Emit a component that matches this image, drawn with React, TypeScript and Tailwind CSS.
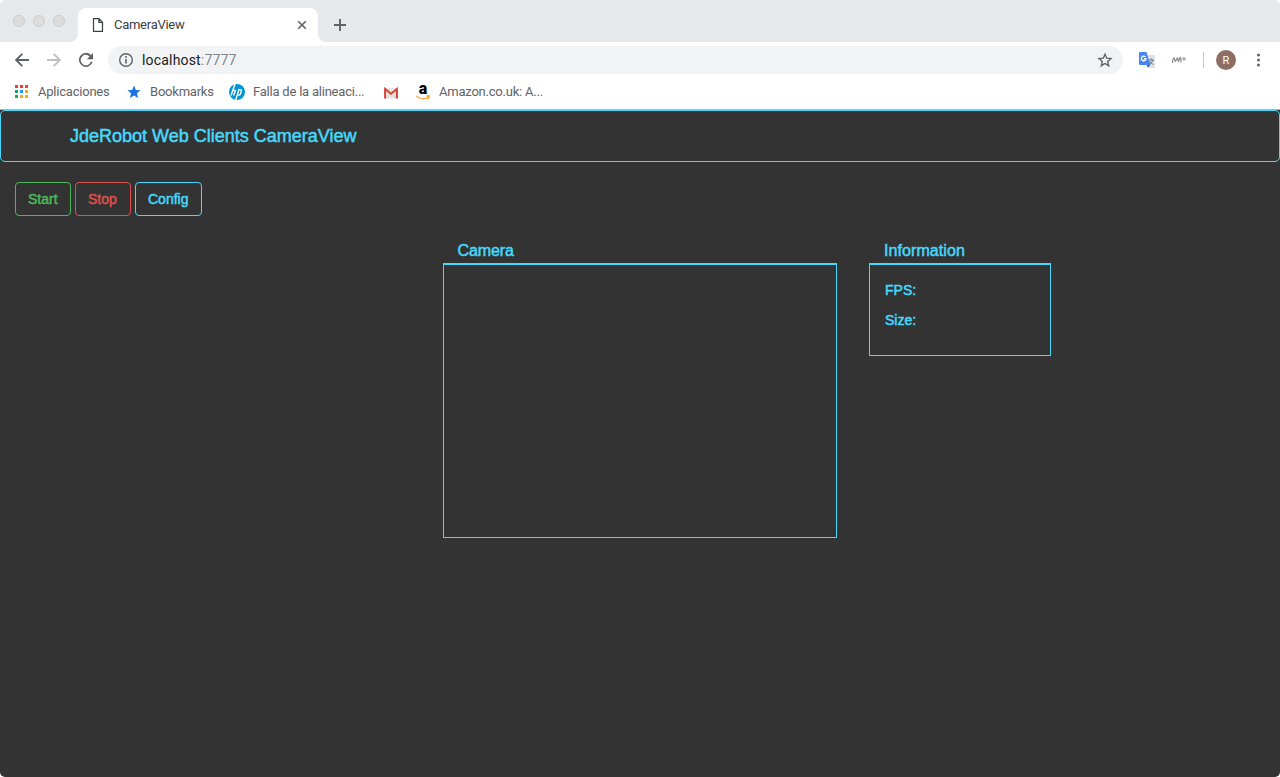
import React from "react";

const chromeFont = "font-['Roboto','Liberation_Sans',sans-serif]";
const pageFont = "font-['Liberation_Sans',sans-serif]";

function TabStrip() {
  return (
    <div className="flex h-[42px] bg-[#e5e9ec] rounded-t-[5px]">
      <div className="flex w-[70px] gap-2 pl-[13px] pt-[15px]">
        {[0, 1, 2].map((i) => (
          <span key={i} className="h-3 w-3 rounded-full border border-[#cbcccd] bg-[#dcdcdc]" />
        ))}
      </div>
      <svg className="mt-[34px] h-2 w-2" viewBox="0 0 8 8"><path d="M8 0v8H0a8 8 0 0 0 8-8" fill="#fff" /></svg>
      <div className="mt-2 flex h-[34px] w-[240px] items-center rounded-t-lg bg-white pl-[14px] pr-[10px]">
        <svg width="12" height="16" viewBox="0 0 12 16" fill="none" stroke="#3c4043" strokeWidth="1.2">
          <path d="M1.5 1.600h5.400l3.600 3.600v9.200h-9zM6.900 1.600v3.800h3.600" />
        </svg>
        <span className="ml-[10px] text-[13px] leading-4 tracking-[-0.27px] text-[#3c4043]">CameraView</span>
        <svg className="ml-auto" width="12" height="12" viewBox="0 0 12 12" stroke="#5f6368" strokeWidth="1.600">
          <path d="m2.200 2.200 7.600 7.600m0-7.600L2.200 9.800" />
        </svg>
      </div>
      <svg className="mt-[34px] h-2 w-2" viewBox="0 0 8 8"><path d="M0 0v8h8a8 8 0 0 1-8-8" fill="#fff" /></svg>
      <svg className="ml-[7px] mt-[18px]" width="14" height="14" viewBox="0 0 14 14" stroke="#5f6368" strokeWidth="1.900">
        <path d="M7 1v12M1 7h12" />
      </svg>
    </div>
  );
}

function Toolbar() {
  return (
    <div className="flex h-9 items-center bg-white pl-[14px]">
      <svg width="16" height="16" viewBox="0 0 16 16" fill="none" stroke="#5f6368" strokeWidth="1.900">
        <path d="M15 8H2.300M8.300 1.800 2.100 8l6.200 6.200" />
      </svg>
      <svg className="ml-4" width="16" height="16" viewBox="0 0 16 16" fill="none" stroke="#bcbec0" strokeWidth="1.900">
        <path d="M1 8h12.700M7.700 1.800 13.900 8l-6.200 6.200" />
      </svg>
      <svg className="ml-4" width="16" height="16" viewBox="0 0 16 16" fill="#5f6368">
        <path d="M13 3A7 7 0 1 0 14.700 9.800h-1.900A5.200 5.200 0 1 1 11.600 4.400L8.800 7.200H15V1z" />
      </svg>
      <div className="ml-[14px] flex h-7 w-[1015px] items-center rounded-full bg-[#f1f3f4] pl-[10px] pr-[10px]">
        <svg width="16" height="16" viewBox="0 0 16 16" fill="none" stroke="#5f6368" strokeWidth="1.400">
          <circle cx="8" cy="8" r="6.300" />
          <path d="M8 7v4.600M8 4.100v1.700" strokeWidth="1.600" />
        </svg>
        <span className="ml-2 text-[14px] leading-4 tracking-[0.18px] text-[#202124]">
          localhost<span className="text-[#80868b]">:7777</span>
        </span>
        <svg className="ml-auto" width="16" height="16" viewBox="0 0 16 16" fill="none" stroke="#5f6368" strokeWidth="1.400">
          <path d="m8 2.200 1.700 4 4.300.4-3.300 2.900 1 4.200L8 11.500l-3.700 2.200 1-4.200L2 6.600l4.300-.4z" />
        </svg>
      </div>
      <svg className="ml-4 shrink-0" width="16" height="16" viewBox="0 0 16 16">
        <path d="M6 3h10v13H8z" fill="#dfe1e5" />
        <path d="M7.500 12.500h4L9 15.500z" fill="#3949ab" />
        <path d="M1 0h6.500l4 13H1a1 1 0 0 1-1-1V1a1 1 0 0 1 1-1" fill="#4688f1" />
        <path d="M6.400 4.900a2.300 2.300 0 1 0 .6 1.800H4.800" fill="none" stroke="#fff" strokeWidth="1.300" />
        <path d="M9.700 8h5.300M12.200 6.500V8m1.600 0c-.5 2-1.800 3.600-3.600 4.700m.6-3.500c.8 1.500 2 2.600 3.500 3.400" fill="none" stroke="#607d8b" />
      </svg>
      <svg className="ml-4 shrink-0" width="16" height="12" viewBox="0 0 16 12" fill="none" stroke="#929292" strokeWidth="1.300" strokeLinecap="round">
        <path d="M1.500 8.500C1.500 6 2.500 3.500 3.200 4c.8.600.3 3.500 1 3.500C5.200 7.500 5.800 3.500 6.600 4c.7.500 0 3.500.8 3.500S8.500 3.200 9.400 3.500c.8.200.4 3 .6 4.500" />
        <path d="M11.300 4.900h3.400M13 3.200v3.400" strokeWidth="1" />
      </svg>
      <div className="ml-4 h-4 w-px bg-[#c9cbcd]" />
      <div className="ml-3 flex h-5 w-5 items-center justify-center rounded-full bg-[#8d6e63] text-[11px] leading-none text-white">R</div>
      <svg className="ml-[15px]" width="14" height="16" viewBox="0 0 14 16" fill="#5f6368">
        <circle cx="7.500" cy="3" r="1.500" /><circle cx="7.500" cy="8" r="1.500" /><circle cx="7.500" cy="13" r="1.500" />
      </svg>
    </div>
  );
}

const appColors = ["#f33b3b", "#f33b3b", "#f33b3b", "#16a765", "#2196f3", "#f6a623", "#16a765", "#f6a623", "#f6a623"];

function Bookmarks() {
  return (
    <div className="flex h-[31px] items-center bg-white pb-[3px] pl-[15px] text-[13px] leading-4 tracking-[-0.22px] text-[#5f6368]">
      <div className="grid -translate-y-px grid-cols-3 gap-[2px]">
        {appColors.map((c, i) => <span key={i} className="h-[3px] w-[3px]" style={{ backgroundColor: c }} />)}
      </div>
      <span className="ml-[10px] w-[72px] whitespace-nowrap">Aplicaciones</span>
      <svg className="ml-[17px]" width="14" height="14" viewBox="0 0 14 14" fill="#1a73e8">
        <path d="m7 .5 1.800 4.400 4.800.3-3.700 3.100 1.200 4.700L7 10.400 2.900 13l1.200-4.700L.4 5.200l4.800-.3z" />
      </svg>
      <span className="ml-[9px] w-[63px] whitespace-nowrap">Bookmarks</span>
      <svg className="ml-4" width="16" height="16" viewBox="0 0 16 16">
        <circle cx="8" cy="8" r="8" fill="#0096d6" />
        <path d="M6 0 2 11.500M3.500 6.200h1.700c1 0 1.200.5.900 1.300l-1.500 4M10.200 4.900 6.700 16M9.500 5.700h1.800c1.100 0 1.300.6 1 1.500l-.9 2.700c-.3.800-.7 1.200-1.600 1.200H8.100" fill="none" stroke="#fff" strokeWidth="1.400" />
      </svg>
      <span className="ml-2 w-[113px] whitespace-nowrap">Falla de la alineaci...</span>
      <svg className="ml-[18px] mt-px" width="14" height="12" viewBox="0 0 14 12">
        <path d="M1 1h12v10.500H1z" fill="#e7e6e5" />
        <path d="m2 11 5-4 5 4" fill="none" stroke="#d7d5d5" />
        <path d="M1.100 11.500V2L7 6.800 12.900 2v9.500" fill="none" stroke="#d54337" strokeWidth="2" />
      </svg>
      <div className="ml-[18px] flex h-4 w-[14px] flex-col items-center">
        <span className="h-[11px] text-[16px] font-black leading-[9px] text-black">a</span>
        <svg width="14" height="5" viewBox="0 0 14 5" fill="none" stroke="#f6a340" strokeWidth="1.300"><path d="M.3 1c4 3.500 8.800 3.500 12 1.200M10.200 1h3.100l-.7 3" /></svg>
      </div>
      <span className="ml-[9px] whitespace-nowrap">Amazon.co.uk: A...</span>
    </div>
  );
}

const stroke = "[-webkit-text-stroke:0.5px_currentColor]";
const buttonBase = "h-[34px] rounded-[4px] border pl-3 text-left text-[14px] leading-8 [-webkit-text-stroke:0.5px_currentColor]";

export default function App() {
  return (
    <div className="h-[777px] w-[1280px] overflow-hidden bg-white">
      <header className={chromeFont}>
        <TabStrip />
        <Toolbar />
        <Bookmarks />
      </header>
      <main className={`${pageFont} h-[668px] rounded-b-[5px] border-t border-[#b5b5b5] bg-[#333] text-[#46d8fc]`}>
        <nav className={`flex h-[52px] items-center rounded-[5px] border border-[#46d8fc] pl-[69px] text-[18px] leading-5 ${stroke}`}>
          JdeRobot Web Clients CameraView
        </nav>
        <div className="mt-5 flex gap-1 pl-[15px]">
          <button className={`${buttonBase} w-14 border-[#4cb85c] text-[#4cb85c]`}>Start</button>
          <button className={`${buttonBase} w-14 border-[#df504d] text-[#df504d]`}>Stop</button>
          <button className={`${buttonBase} w-[67px] border-[#46d8fc]`}>Config</button>
        </div>
        <div className="mt-6 flex items-start gap-8 pl-[443px]">
          <section className="w-[394px]">
            <h2 className={`h-[23px] pl-[14.5px] text-[16px] leading-[22px] tracking-[-0.1px] ${stroke}`}>Camera</h2>
            <div className="h-[275px] border border-t-2 border-[#46d8fc]" />
          </section>
          <section className="w-[182px]">
            <h2 className={`h-[23px] pl-[15px] text-[16px] leading-[22px] tracking-[0.08px] ${stroke}`}>Information</h2>
            <div className={`flex h-[93px] flex-col gap-[10px] border border-t-2 border-[#46d8fc] pl-[15px] pt-[15px] text-[14px] leading-5 ${stroke}`}>
              <p>FPS:</p>
              <p>Size:</p>
            </div>
          </section>
        </div>
      </main>
    </div>
  );
}
